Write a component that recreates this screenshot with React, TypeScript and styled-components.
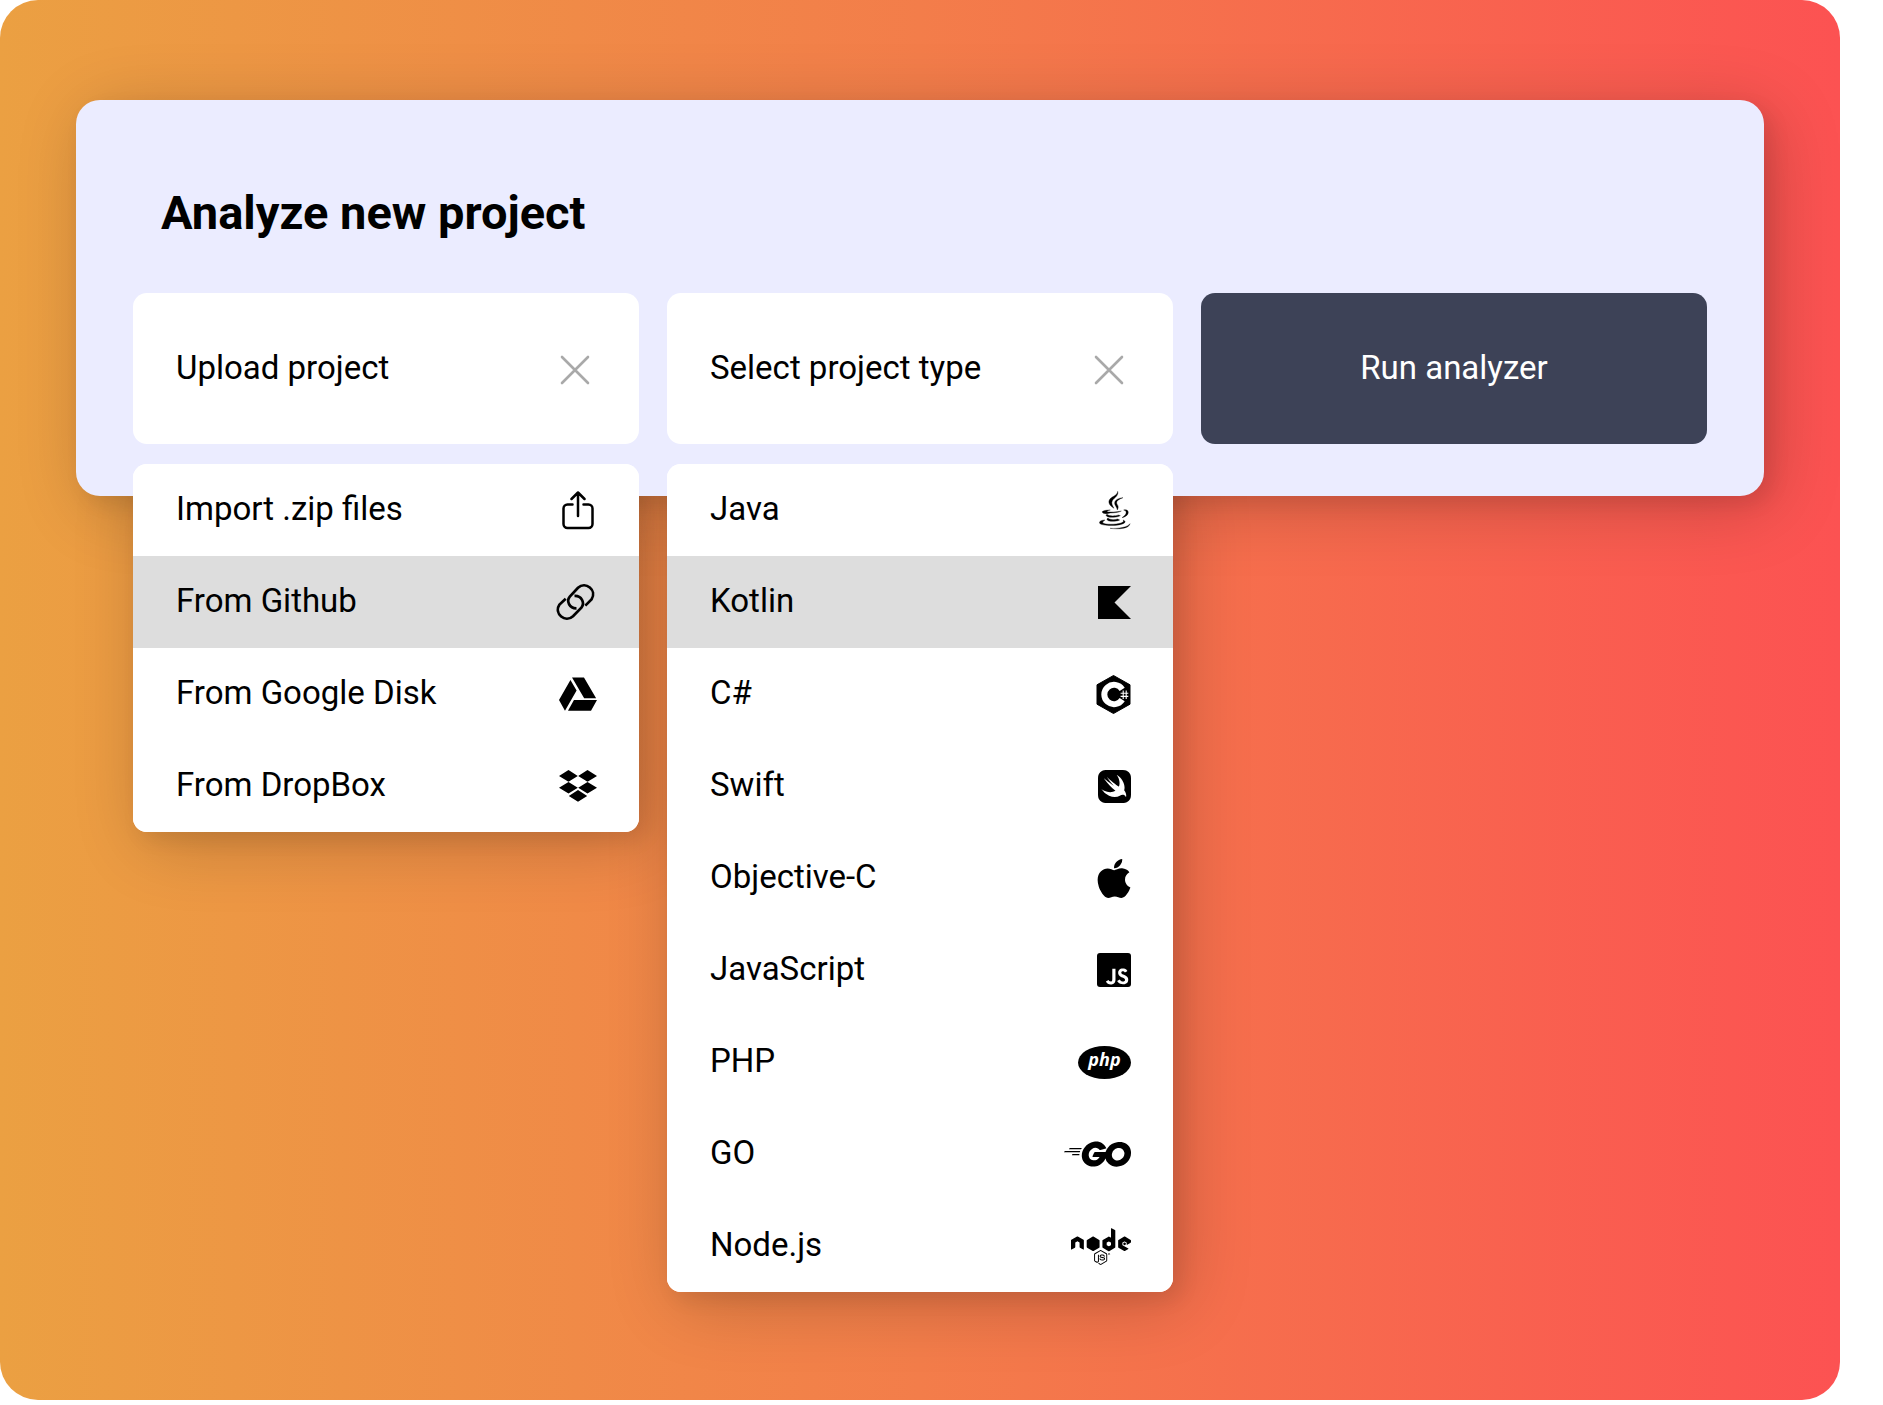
import React from "react";
import styled, { createGlobalStyle } from "styled-components";
import { FaApple, FaGoogleDrive, FaNode } from "react-icons/fa";
import { SiGo, SiJavascript, SiSwift } from "react-icons/si";

const GlobalStyle = createGlobalStyle`
  *, *::before, *::after { box-sizing: border-box; }
  body {
    margin: 0;
    background: #fff;
    color: #000;
    font-family: Roboto, "Liberation Sans", sans-serif;
  }
  button { font: inherit; color: inherit; border: 0; cursor: pointer; }
`;

const shadow = "8px 8px 20px rgba(0, 0, 0, 0.08), 10px 12px 70px rgba(0, 0, 0, 0.2)";

const Canvas = styled.main`
  isolation: isolate;
  min-height: calc(100vh - 5px);
  margin-right: 43px;
  padding: 100px 76px;
  overflow: hidden;
  border-radius: 38px;
  background: linear-gradient(90deg, #eba042 0%, #f37d4a 50%, #fc5252 100%);
`;

const Panel = styled.section`
  padding: 85px 57px 52px;
  border-radius: 24px;
  background: #ebecff;
  box-shadow: ${shadow};
`;

const Title = styled.h1`
  margin: 0 28px 52px;
  font-size: 47px;
  line-height: 56px;
  font-weight: 700;
`;

const Columns = styled.div`
  display: grid;
  grid-template-columns: repeat(3, minmax(0, 1fr));
  gap: 28px;
`;

const Column = styled.div`
  position: relative;
`;

const Field = styled.div`
  display: flex;
  align-items: center;
  justify-content: space-between;
  height: 151px;
  padding: 0 43px;
  border-radius: 14px;
  background: #fff;
`;

const Label = styled.span`
  padding-bottom: 2px;
  font-size: 33px;
  line-height: 38px;
  white-space: nowrap;
`;

const ClearButton = styled.button`
  display: grid;
  place-items: center;
  width: 42px;
  height: 44px;
  padding: 2px 0 0;
  background: transparent;
`;

const RunButton = styled.button`
  display: flex;
  align-items: center;
  justify-content: center;
  height: 151px;
  padding: 0;
  border-radius: 14px;
  background: #3d4257;
  && { color: #fff; }
`;

/* The shadow sits on its own layer so that it falls behind the panel, on the backdrop only. */
const Dropdown = styled.div`
  position: absolute;
  top: 100%;
  left: 0;
  right: 0;
  margin-top: 20px;

  &::before {
    content: "";
    position: absolute;
    inset: 0;
    z-index: -1;
    border-radius: 14px;
    box-shadow: ${shadow};
  }
`;

const Menu = styled.ul`
  margin: 0;
  padding: 0;
  overflow: hidden;
  list-style: none;
  border-radius: 14px;
  background: #fff;
`;

const Option = styled.button<{ $active?: boolean }>`
  display: flex;
  align-items: center;
  justify-content: space-between;
  width: 100%;
  height: 92px;
  padding: 0 42px 0 43px;
  text-align: left;
  background: ${(p) => (p.$active ? "#ddd" : "#fff")};
`;

const Cross = () => (
  <svg width="30" height="30" viewBox="0 0 30 30" fill="none" stroke="#a9a9a9" strokeWidth="2.6" strokeLinecap="round" aria-hidden="true">
    <path d="M2 2 28 28M28 2 2 28" />
  </svg>
);

const ShareIcon = () => (
  <svg width="38" height="39" viewBox="0 0 38 39" fill="none" stroke="#000" strokeWidth="2.5" strokeLinecap="round" strokeLinejoin="round" aria-hidden="true">
    <path d="M13.500 13.500H8.500a4 4 0 0 0-4 4V33a4 4 0 0 0 4 4h21a4 4 0 0 0 4-4V17.500a4 4 0 0 0-4-4h-5M19 25V1.500M12.500 8l6.500-6.500L25.500 8" />
  </svg>
);

const LinkIcon = () => (
  <svg width="41" height="38" viewBox="0 0 41 38" fill="none" stroke="#000" strokeWidth="2.7" aria-hidden="true">
    <path d="M20.500 25.300C13.500 25.500 10 18.200 13.800 13.600L22 4.800C29.500-2.200 41.500 7 35.500 16.400L29.300 22.600" />
    <path d="M18.500 12.900C25.500 12.500 29.200 19.800 25.400 24.600L17 33.200C9.500 40.200-2.500 31 3.500 21.600L9.700 15.800" />
  </svg>
);

const DriveIcon = () => (
  <svg width="38" height="34" viewBox="0 32 512 448" aria-hidden="true">
    <FaGoogleDrive size={512} />
  </svg>
);

const DropboxIcon = () => (
  <svg width="38" height="32" viewBox="0 0 38 32" aria-hidden="true">
    <path d="M9.500 0 18.800 5.900 9.500 11.700 0 5.900ZM28.500 0 38 5.900 28.500 11.700 19.200 5.900ZM9.500 12 18.800 17.800 9.500 23.500 0 17.800ZM28.500 12 38 17.800 28.500 23.500 19.200 17.800ZM19 20 28.200 25.900 19 31.700 9.800 25.900Z" />
  </svg>
);

const JavaIcon = () => (
  <svg width="32" height="39" viewBox="118 62 96 117" stroke="#000" strokeWidth="1" aria-hidden="true">
    <path d="M174 63C178 76 164 82 158 91 154 98 158 105 163 114 150 106 145 97 149 89 154 79 174 76 174 63Z" />
    <path d="M190 82C177 87 171 91 171 97 171 104 180 106 173 119 172 109 164 105 165 97 166 88 178 83 190 82Z" />
    <path d="M152 119C140 119 129 121 129 124 129 129 171 130 185 122 173 125 150 126 142 124 140 122 146 120 152 119Z" />
    <path d="M128 124C127 129 136 130 142 130L150 128 139 123Z" />
    <path d="M192 119C203 116 208 123 205 130 203 136 195 140 187 142 197 135 201 129 199 124 198 121 195 120 192 119Z" />
    <path d="M142 132C135 136 143 141 155 141 165 141 174 140 182 136L176 134C166 138 148 138 142 132Z" />
    <path d="M145 143C137 148 146 153 157 153 167 153 174 152 180 149L174 146C165 149 150 149 145 143Z" />
    <path d="M136 149C125 149 117 154 120 159 126 168 184 168 195 157 199 153 193 150 190 149 194 153 190 156 184 158 168 163 136 163 130 158 127 155 132 152 136 149Z" />
    <path d="M211 160C209 174 180 178 151 174 178 175 203 171 211 160Z" />
  </svg>
);

const KotlinIcon = () => (
  <svg width="33" height="33" viewBox="0 0 24 24" aria-hidden="true">
    <path d="M24 24H0V0h24L12 12Z" />
  </svg>
);

const CSharpIcon = () => (
  <svg width="35" height="39" viewBox="0 0 35 39" aria-hidden="true">
    <path d="M17.500.500 34 9.800V29.200L17.500 38.500 1 29.200V9.800Z" stroke="#000" strokeWidth="1" strokeLinejoin="round" />
    <path d="M26.200 14.300A9.700 9.700 0 1 0 26.200 24.700" fill="none" stroke="#fff" strokeWidth="6" />
    <path d="M27.200 15.500V24M30.200 15.500V24M24.600 18.200H32.300M24.600 21.400H32.300" fill="none" stroke="#fff" strokeWidth="1.100" />
  </svg>
);

const SwiftIcon = () => <SiSwift size={33} aria-hidden="true" />;

const AppleIcon = () => (
  <svg width="34" height="39" viewBox="68 32 376 448" aria-hidden="true">
    <FaApple size={512} />
  </svg>
);

const RoundedJs = styled(SiJavascript)`
  border-radius: 3px;
`;

const JavaScriptIcon = () => <RoundedJs size={34} aria-hidden="true" />;

const PhpIcon = () => (
  <svg width="53" height="33" viewBox="0 0 53 33" aria-hidden="true">
    <ellipse cx="26.500" cy="16.500" rx="26.500" ry="16.500" />
    <text x="26.500" y="20" fill="#fff" textAnchor="middle" fontFamily="Open Sans, sans-serif" fontWeight="700" fontStyle="italic" fontSize="18">php</text>
  </svg>
);

const GoIcon = () => (
  <svg width="67" height="26" viewBox="0 7.300 24 9.300" aria-hidden="true">
    <SiGo size={24} />
  </svg>
);

const NodeIcon = () => (
  <svg width="60" height="37" viewBox="0 124 640 392" aria-hidden="true">
    <FaNode size={640} />
  </svg>
);

type Entry = { name: string; Icon: () => React.ReactElement; active?: boolean };

const sources: Entry[] = [
  { name: "Import .zip files", Icon: ShareIcon },
  { name: "From Github", Icon: LinkIcon, active: true },
  { name: "From Google Disk", Icon: DriveIcon },
  { name: "From DropBox", Icon: DropboxIcon },
];

const languages: Entry[] = [
  { name: "Java", Icon: JavaIcon },
  { name: "Kotlin", Icon: KotlinIcon, active: true },
  { name: "C#", Icon: CSharpIcon },
  { name: "Swift", Icon: SwiftIcon },
  { name: "Objective-C", Icon: AppleIcon },
  { name: "JavaScript", Icon: JavaScriptIcon },
  { name: "PHP", Icon: PhpIcon },
  { name: "GO", Icon: GoIcon },
  { name: "Node.js", Icon: NodeIcon },
];

function Picker({ label, entries }: { label: string; entries: Entry[] }) {
  return (
    <Column>
      <Field>
        <Label>{label}</Label>
        <ClearButton type="button" aria-label={`Close ${label}`}>
          <Cross />
        </ClearButton>
      </Field>
      <Dropdown>
        <Menu aria-label={label}>
          {entries.map(({ name, Icon, active }) => (
            <li key={name}>
              <Option type="button" $active={active} aria-pressed={!!active}>
                <Label>{name}</Label>
                <Icon />
              </Option>
            </li>
          ))}
        </Menu>
      </Dropdown>
    </Column>
  );
}

export default function App() {
  return (
    <>
      <GlobalStyle />
      <Canvas>
        <Panel>
          <Title>Analyze new project</Title>
          <Columns>
            <Picker label="Upload project" entries={sources} />
            <Picker label="Select project type" entries={languages} />
            <RunButton type="button">
              <Label>Run analyzer</Label>
            </RunButton>
          </Columns>
        </Panel>
      </Canvas>
    </>
  );
}
